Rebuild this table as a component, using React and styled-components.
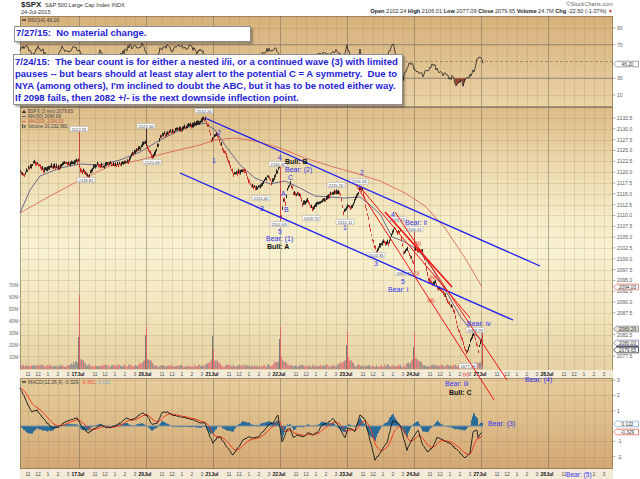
import React from 'react';
import styled, { createGlobalStyle } from 'styled-components';

const FONT = '"Liberation Sans", Arial, sans-serif';

const GlobalStyle = createGlobalStyle`
  html, body { margin: 0; padding: 0; background: #fff; }
  body { font-family: ${FONT}; }
`;

// ---- chart geometry (page pixel coords) ----
const TOP_RSI = 16, H_RSI = 91;
const TOP_MAIN = 107, H_MAIN = 263;
const TOP_S1 = 370, H_S1 = 8;
const TOP_MACD = 378, H_MACD = 91;
const TOP_S2 = 469, H_S2 = 10;

const py = p => 118 + (2132.5 - p) * 4.33;
const ry = v => 28 + (90 - v) * 0.8375;
const my = v => 426 - v * 15.3;

const rng = seed => () => {
  seed = (seed + 0x6d2b79f5) | 0;
  let t = Math.imul(seed ^ (seed >>> 15), 1 | seed);
  t = (t + Math.imul(t ^ (t >>> 7), 61 | t)) ^ t;
  return ((t ^ (t >>> 14)) >>> 0) / 4294967296;
};

const lerp = (pts, x) => {
  if (x <= pts[0][0]) return pts[0][1];
  for (let i = 1; i < pts.length; i++) {
    const [x1, y1] = pts[i];
    const [x0, y0] = pts[i - 1];
    if (x <= x1) return y0 + ((y1 - y0) * (x - x0)) / (x1 - x0 || 1);
  }
  return pts[pts.length - 1][1];
};

const toPath = pts => pts.map(([x, y], i) => `${i ? 'L' : 'M'}${x.toFixed(1)} ${y.toFixed(1)}`).join('');

const DAYS = [[79, '17Jul'], [146, '20Jul'], [213, '21Jul'], [280, '22Jul'], [347, '23Jul'], [414, '24Jul'], [481, '27Jul'], [548, '28Jul']];
const DAY_STARTS = [12, ...DAYS.map(d => d[0])];
const HOURS = DAY_STARTS.flatMap(D => [[D + 16, '11'], [D + 26, '12'], [D + 36, '1'], [D + 46, '2'], [D + 56, '3']])
  .filter(([x]) => x > 21 && x < 612);

const PRICE = [[20,172],[24,175],[28,168],[33,163],[38,164],[43,170],[48,168],[53,166],[58,168],[63,163],[68,164],[73,162],[78,160],[80,170],[84,172],[88,176],[92,169],[97,164],[103,166],[110,163],[116,165],[122,163],[128,161],[132,154],[136,151],[141,146],[145,142],[148,150],[152,157],[156,150],[160,137],[165,134],[170,132],[176,130],[182,128],[188,126],[193,125],[197,123],[201,120],[205,119],[208,126],[211,139],[214,137],[217,134],[219,141],[222,147],[226,156],[230,167],[233,174],[237,173],[241,171],[245,172],[249,183],[253,187],[257,188],[261,184],[265,180],[268,176],[271,182],[274,177],[277,171],[279,166],[281,216],[283,199],[285,204],[287,190],[290,183],[293,192],[296,196],[299,193],[302,204],[307,200],[312,209],[317,203],[322,201],[327,198],[331,193],[336,192],[340,194],[343,213],[347,205],[352,207],[355,198],[359,190],[362,188],[365,205],[368,219],[372,240],[376,251],[379,247],[383,242],[388,243],[392,233],[394,228],[397,233],[400,231],[403,252],[407,250],[410,257],[413,262],[415,249],[418,251],[422,250],[425,265],[428,280],[432,285],[435,283],[438,288],[443,293],[447,300],[452,308],[455,316],[458,330],[462,340],[465,350],[467,352],[470,341],[473,334],[475,338],[478,351],[480,343],[482,336]];

const MA50 = [[20,213],[30,190],[40,176],[60,168],[80,164],[100,165],[120,160],[140,152],[160,140],[180,130],[195,125],[205,123],[215,130],[225,145],[240,165],[255,178],[270,184],[285,181],[300,188],[315,196],[330,197],[345,198],[360,197],[370,205],[380,214],[392,237],[403,241],[418,250],[432,268],[447,293],[460,316],[472,332],[482,340]];

const MA200 = [[20,213],[50,196],[80,180],[110,166],[140,160],[170,152],[200,145],[215,140],[235,138],[255,141],[280,148],[305,158],[330,166],[355,173],[380,181],[405,193],[425,206],[445,228],[465,258],[482,287]];

const RSI = [[20,50],[26,46],[32,55],[38,47],[44,52],[50,60],[56,56],[62,48],[68,52],[74,46],[80,50],[86,62],[92,58],[100,52],[108,62],[116,58],[124,52],[130,46],[136,48],[142,45],[148,55],[155,62],[160,50],[166,46],[172,50],[178,47],[184,48],[190,46],[196,52],[202,50],[208,68],[214,84],[220,82],[228,78],[236,74],[244,70],[252,64],[258,58],[264,52],[270,49],[276,50],[280,55],[282,88],[286,70],[292,60],[298,66],[305,72],[312,60],[318,54],[324,51],[330,55],[336,50],[342,58],[347,47],[352,60],[356,66],[360,51],[364,70],[370,80],[376,84],[382,66],[388,54],[393,46],[397,58],[400,72],[403,79],[407,67],[410,62],[413,66],[418,72],[423,75],[428,70],[433,64],[437,70],[441,72],[446,75],[450,80],[453,76],[456,86],[460,80],[463,85],[466,78],[470,76],[474,70],[477,59],[480,58],[483,63]];

const MACD = [[20,388],[25,398],[28,405],[32,412],[37,410],[42,417],[47,423],[52,428],[58,427],[65,422],[70,420],[77,418],[82,427],[88,433],[95,428],[100,425],[107,428],[113,427],[120,423],[127,418],[132,420],[137,417],[142,413],[147,415],[152,425],[157,423],[162,413],[167,412],[173,415],[180,417],[187,418],[193,420],[200,423],[205,423],[210,437],[213,443],[217,438],[220,437],[227,447],[233,455],[238,448],[243,440],[248,437],[253,438],[258,437],[263,432],[268,425],[273,423],[278,415],[282,442],[287,430],[290,428],[293,437],[298,435],[303,437],[308,433],[313,435],[318,432],[322,425],[327,423],[333,419],[338,425],[345,438],[348,428],[355,431],[360,415],[365,420],[370,440],[375,460],[380,453],[387,442],[393,420],[400,425],[407,450],[410,443],[418,430],[422,443],[427,452],[433,447],[437,438],[443,440],[450,443],[457,450],[462,455],[465,458],[470,453],[473,432],[477,430],[478,437],[482,432]];

// ---- generated series ----
const BARS = (() => {
  const r = rng(7);
  let black = '', red = '';
  let prev = lerp(PRICE, 20);
  for (let x = 20; x <= 482; x++) {
    const y = lerp(PRICE, x) + (r() - 0.5) * 2.6;
    const hi = y - 0.8 - r() * 1.8;
    const lo = y + 0.8 + r() * 1.8;
    const seg = `M${x + 0.5} ${hi.toFixed(1)}V${lo.toFixed(1)}`;
    if (y > prev + 0.3) red += seg; else black += seg;
    prev = y;
  }
  return { black, red };
})();

const VOL = (() => {
  const r = rng(11);
  let red = '', gray = '';
  for (let x = 21; x <= 482; x++) {
    const D = 12 + 67 * Math.floor((x - 12) / 67);
    const t = x - D;
    let h = 2 + r() * 2.8;
    if (t > 58) h += (t - 58) * 0.5 + r() * 2;
    if (t > 0 && t < 8) h += (8 - t) * 0.9 + r() * 2;
    const seg = `M${x + 0.5} 369V${(369 - h).toFixed(1)}`;
    if (r() < 0.55) red += seg; else gray += seg;
  }
  return { red, gray };
})();

const SPIKES = [[79, 295, 337], [146, 327, 335], [213, 350, 336], [280, 327, 339], [347, 332, 345], [414, 333, 347]];

const RSI_LINE = (() => {
  const r = rng(3);
  const pts = [];
  for (let x = 20; x <= 483; x++) pts.push([x, Math.min(92, lerp(RSI, x) + (r() - 0.5) * 5)]);
  return pts;
})();

const MACD_SERIES = (() => {
  const r = rng(5);
  const m = [], s = [];
  let sig = lerp(MACD, 20);
  for (let x = 20; x <= 482; x++) {
    const v = lerp(MACD, x) + (r() - 0.5) * 1.4;
    sig += 0.16 * (v - sig);
    m.push([x, v]);
    s.push([x, sig]);
  }
  const hist = m.map(([x, v], i) => `M${x + 0.5} 426V${(426 + (v - s[i][1]) * 0.85).toFixed(1)}`).join('');
  return { m, s, hist };
})();

const PRICE_TAGS = [
  [79, 129, '2122.91'], [146, 126, '2125.50'], [152, 162, '2120.69'], [86, 180, '2118.81'],
  [204, 111, '2132.26'], [278, 164, '2116.92'], [261, 198, '2115.40'], [279, 224, '2102.63'],
  [311, 218, '2109.70'], [336, 185, '2115.20'], [345, 222, '2110.11'], [359, 181.5, '2116.33'],
  [397, 219, '2105.19'], [414, 229, '2106.01'], [376, 255, '2102.35'], [404, 273, '2096.72'],
  [475, 330, '2083.29'], [468, 366, '2077.09'],
];

// axis levels that the value tags cover are left out
const PRICE_LEVELS = Array.from({ length: 23 }, (_, i) => 2132.5 - i * 2.5)
  .filter(v => v !== 2085 && v !== 2080);

// ---- styled parts ----
const Page = styled.div`
  position: relative;
  width: 640px;
  height: 479px;
  overflow: hidden;
  background: #fff;
`;

const Header = styled.header`
  display: flex;
  justify-content: space-between;
  height: 16px;
  padding: 1px 27px 0 21px;
  box-sizing: border-box;
  color: #333;
  font-family: ${FONT};
`;

const HeadBlock = styled.div`
  display: flex;
  flex-direction: column;
  align-items: ${p => (p.$right ? 'flex-end' : 'flex-start')};
`;

const HeadLine = styled.div`
  font-size: 5.6px;
  line-height: 7px;
  white-space: nowrap;
  color: ${p => p.$muted ? '#666' : '#333'};
`;

const Ticker = styled.b`
  font-size: 8px;
  color: #222;
  margin-right: 2px;
`;

const Key = styled.b`
  color: #222;
`;

const DownArrow = styled.span`
  color: #d01818;
  font-size: 5px;
`;

const ChartStack = styled.div`
  position: relative;
  display: flex;
  flex-direction: column;
`;

const PanelRow = styled.div`
  display: grid;
  grid-template-columns: 20px 593px 27px;
  height: ${p => p.$h}px;
`;

const Plot = styled.div`
  position: relative;
  background: ${p => p.$bg};
  &::after {
    content: '';
    position: absolute;
    inset: 0;
    border: 1px solid rgba(110, 95, 70, 0.55);
    border-width: ${p => p.$edges || '1px'};
    pointer-events: none;
  }
`;

const StripCell = styled.div`
  background: #f4ead8;
`;

const Svg = styled.svg`
  display: block;
  overflow: visible;
`;

const Overlay = styled.svg`
  position: absolute;
  left: 0;
  top: 0;
  pointer-events: none;
  overflow: visible;
`;

const Note = styled.div`
  position: absolute;
  left: ${p => p.$x}px;
  top: ${p => p.$y}px;
  width: ${p => p.$w}px;
  box-sizing: border-box;
  padding: ${p => p.$pad};
  background: #fff;
  border: 1px solid #8e8e8e;
  box-shadow: 2px 2px 2px rgba(0, 0, 0, 0.3);
  color: #1e22d8;
  font: bold 9.5px/12px ${FONT};
  white-space: pre;
`;

const RSI_BG = 'linear-gradient(180deg, #d6b07b 0%, #dfc08e 45%, #ead3a6 100%)';
const MAIN_BG = 'linear-gradient(180deg, #dcbb86 0%, #ecd9ad 22%, #f6edca 45%, #f8f1d0 55%, #f1e4bc 78%, #e6d1a2 100%)';
const MACD_BG = 'linear-gradient(180deg, #e7cd9d 0%, #dcbb88 50%, #d2a875 100%)';

// ---- svg pieces ----
const VGrid = ({ top, h }) => (
  <g>
    {HOURS.map(([x]) => (
      <line key={x} x1={x + 0.5} x2={x + 0.5} y1={top} y2={top + h} stroke="rgba(140,110,60,0.17)" strokeWidth="1" />
    ))}
    {DAYS.map(([x]) => (
      <line key={'d' + x} x1={x + 0.5} x2={x + 0.5} y1={top} y2={top + h} stroke="rgba(95,85,70,0.42)" strokeWidth="1" />
    ))}
  </g>
);

const HGrid = ({ ys, stroke = 'rgba(140,110,60,0.17)' }) => (
  <g>
    {ys.map(y => (
      <line key={y} x1="20" x2="613" y1={Math.round(y) + 0.5} y2={Math.round(y) + 0.5} stroke={stroke} strokeWidth="1" />
    ))}
  </g>
);

const AxisLabels = ({ items }) => (
  <g fontFamily={FONT} fontSize="5" fill="#5a5a5a">
    {items.map(([y, t]) => (
      <g key={t}>
        <line x1="613" x2="615.5" y1={y} y2={y} stroke="#777" strokeWidth="0.6" />
        <text x="617" y={y} dominantBaseline="central">{t}</text>
      </g>
    ))}
  </g>
);

const AxisTag = ({ y, t, stroke, fill = '#fff', color = '#333' }) => (
  <g fontFamily={FONT} fontSize="4.8">
    <path d={`M613.5 ${y} L616.5 ${y - 2.8} H638.5 V${y + 2.8} H616.5 Z`} fill={fill} stroke={stroke} strokeWidth="0.7" />
    <text x="627.5" y={y + 0.2} dominantBaseline="central" textAnchor="middle" fill={color}>{t}</text>
  </g>
);

const PriceTag = ({ x, y, t }) => (
  <g>
    <rect x={x - 9} y={y - 2.6} width="18" height="5.2" rx="0.6" fill="#fff" stroke="#a0a0a0" strokeWidth="0.5" />
    <text x={x} y={y + 0.2} fontFamily={FONT} fontSize="4.2" fill="#444" textAnchor="middle" dominantBaseline="central">{t}</text>
  </g>
);

const WaveText = ({ x, y, children, color = '#3434f0', bold, size = 7, anchor = 'start' }) => (
  <text x={x} y={y} fill={color} fontFamily={FONT} fontSize={size} fontWeight={bold ? 'bold' : 'normal'} textAnchor={anchor} dominantBaseline="central">
    {children}
  </text>
);

const TimeAxis = ({ top, h, hide = [] }) => (
  <Svg width="593" height={h} viewBox={`20 ${top} 593 ${h}`}>
    <g fontFamily={FONT} fontSize="5" textAnchor="middle" dominantBaseline="central">
      {HOURS.filter(([x]) => !hide.includes(x)).map(([x, t]) => (
        <text key={x} x={x} y={top + h / 2} fill="#555">{t}</text>
      ))}
      {DAYS.map(([x, t]) => (
        <text key={t} x={x - 1} y={top + h / 2} fill="#111" fontWeight="bold">{t}</text>
      ))}
    </g>
  </Svg>
);

// ---- panels ----
const RsiPanel = () => (
  <PanelRow $h={H_RSI}>
    <div />
    <Plot $bg={RSI_BG}>
      <Svg width="593" height={H_RSI} viewBox={`20 ${TOP_RSI} 593 ${H_RSI}`}>
        <VGrid top={TOP_RSI} h={H_RSI} />
        <HGrid ys={[ry(90), ry(10)]} />
        <line x1="20" x2="613" y1={ry(70)} y2={ry(70)} stroke="#8d8170" strokeWidth="1" />
        <line x1="20" x2="613" y1={ry(30)} y2={ry(30)} stroke="#8d8170" strokeWidth="1" />
        <line x1="20" x2="613" y1={ry(50)} y2={ry(50)} stroke="#8d8170" strokeWidth="0.8" strokeDasharray="3 2" />
        <path
          d={RSI_LINE.filter(([, y]) => y > ry(30)).map(([x, y]) => `M${x + 0.5} ${ry(30)}V${y.toFixed(1)}`).join('')}
          stroke="#9b4434" strokeWidth="1"
        />
        <path d={toPath(RSI_LINE)} fill="none" stroke="#222" strokeWidth="0.8" />
        <path d="M22 20h4" stroke="#222" strokeWidth="1.2" />
        <text x="28" y="20" fontFamily={FONT} fontSize="5" fill="#444" dominantBaseline="central">RSI(14) 46.20</text>
      </Svg>
    </Plot>
    <Svg width="27" height={H_RSI} viewBox={`613 ${TOP_RSI} 27 ${H_RSI}`}>
      <AxisLabels items={[[ry(90), '90'], [ry(70), '70'], [ry(30), '30'], [ry(10), '10']]} />
      <AxisTag y={64} t="46.20" stroke="#777" />
    </Svg>
  </PanelRow>
);

const MainPanel = () => (
  <PanelRow $h={H_MAIN}>
    <Svg width="20" height={H_MAIN} viewBox={`0 ${TOP_MAIN} 20 ${H_MAIN}`}>
      <g fontFamily={FONT} fontSize="4.6" fill="#666" textAnchor="end">
        {[70, 60, 50, 40, 30, 20, 10].map(v => (
          <g key={v}>
            <text x="18" y={369 - v * 1.2} dominantBaseline="central">{v}M</text>
            <line x1="18.5" x2="20" y1={369 - v * 1.2} y2={369 - v * 1.2} stroke="#888" strokeWidth="0.5" />
          </g>
        ))}
      </g>
    </Svg>
    <Plot $bg={MAIN_BG} $edges="0 1px 0 1px">
      <Svg width="593" height={H_MAIN} viewBox={`20 ${TOP_MAIN} 593 ${H_MAIN}`}>
        <VGrid top={TOP_MAIN} h={H_MAIN} />
        <HGrid ys={Array.from({ length: 24 }, (_, i) => py(2135 - i * 2.5))} />
        <line x1="20" x2="613" y1="107.5" y2="107.5" stroke="#8d8170" strokeWidth="1" />
        <path d={VOL.red} stroke="#e07878" strokeWidth="1" opacity="0.85" />
        <path d={VOL.gray} stroke="#8c8c8c" strokeWidth="1" opacity="0.85" />
        {SPIKES.map(([x, rt, gt]) => (
          <g key={x}>
            <line x1={x + 0.5} x2={x + 0.5} y1="369" y2={rt} stroke="#e06464" strokeWidth="1" />
            <line x1={x - 0.5} x2={x - 0.5} y1="369" y2={gt} stroke="#7a7a7a" strokeWidth="1" />
          </g>
        ))}
        <path d={toPath(MA200)} fill="none" stroke="#d85a4c" strokeWidth="0.8" />
        <path d={toPath(MA50)} fill="none" stroke="#5b5b84" strokeWidth="0.9" />
        <path d={BARS.red} stroke="#cf1d1d" strokeWidth="0.9" />
        <path d={BARS.black} stroke="#111" strokeWidth="0.9" />
        <line x1="79.5" x2="79.5" y1="131" y2="162" stroke="#d23030" strokeWidth="0.8" />
        <line x1="146.5" x2="146.5" y1="128" y2="146" stroke="#111" strokeWidth="0.8" />
        <line x1="280.5" x2="280.5" y1="166" y2="221" stroke="#d23030" strokeWidth="0.8" />
        <line x1="414.5" x2="414.5" y1="231" y2="272" stroke="#d23030" strokeWidth="0.8" />
        <line x1="482.5" x2="482.5" y1="330" y2="366" stroke="#d23030" strokeWidth="0.8" />
        {PRICE_TAGS.map(([x, y, t]) => <PriceTag key={t} x={x} y={y} t={t} />)}
        <g fontFamily={FONT} fontSize="4.6" fill="#444">
          <path d="M22 113l2-3 2 3z" fill="#222" />
          <text x="28" y="111.5" dominantBaseline="central">$SPX (3 min) 2079.65</text>
          <path d="M22 116.5h4" stroke="#5b5b84" strokeWidth="1" />
          <text x="28" y="116.5" dominantBaseline="central">MA(50) 2086.99</text>
          <path d="M22 121.5h4" stroke="#d85a4c" strokeWidth="1" />
          <text x="28" y="121.5" dominantBaseline="central" fill="#c05040">MA(200) 2094.03</text>
          <path d="M22 128V124h1.2v4zM24.2 128v-3h1.2v3z" fill="#555" />
          <text x="28" y="126.5" dominantBaseline="central">Volume 20,232,982</text>
        </g>
      </Svg>
    </Plot>
    <Svg width="27" height={H_MAIN} viewBox={`613 ${TOP_MAIN} 27 ${H_MAIN}`}>
      <AxisLabels items={PRICE_LEVELS.map(v => [py(v), v.toFixed(1)])} />
      <AxisTag y={287} t="2094.03" stroke="#d85a4c" />
      <AxisTag y={329} t="2083.29" stroke="#777" fill="#e8e2d8" />
      <AxisTag y={343} t="2080.00" stroke="#6a6a9a" />
      <line x1="616" x2="638.5" y1="346.3" y2="346.3" stroke="#1c1c50" strokeWidth="0.8" />
      <AxisTag y={350} t="2079.65" stroke="#111" />
    </Svg>
  </PanelRow>
);

const AxisStrip = ({ top, h, hide }) => (
  <PanelRow $h={h}>
    <div />
    <StripCell>
      <TimeAxis top={top} h={h} hide={hide} />
    </StripCell>
    <div />
  </PanelRow>
);

const MacdPanel = () => (
  <PanelRow $h={H_MACD}>
    <div />
    <Plot $bg={MACD_BG}>
      <Svg width="593" height={H_MACD} viewBox={`20 ${TOP_MACD} 593 ${H_MACD}`}>
        <VGrid top={TOP_MACD} h={H_MACD} />
        <HGrid ys={[my(3), my(2), my(1), my(-1), my(-2)]} stroke="rgba(150,115,65,0.2)" />
        <path d={MACD_SERIES.hist} stroke="#2a6c98" strokeWidth="1" />
        <line x1="20" x2="483" y1="426" y2="426" stroke="#7d8fa0" strokeWidth="1" />
        <path d={toPath(MACD_SERIES.s)} fill="none" stroke="#f23a22" strokeWidth="1" />
        <path d={toPath(MACD_SERIES.m)} fill="none" stroke="#151515" strokeWidth="0.9" />
        <path d="M22 382h4" stroke="#111" strokeWidth="1.2" />
        <text x="28" y="382" fontFamily={FONT} fontSize="5" fill="#444" dominantBaseline="central">
          MACD(12,26,9) -0.329, <tspan fill="#e84a3a">-0.451</tspan>, <tspan fill="#7ea4c6">0.122</tspan>
        </text>
      </Svg>
    </Plot>
    <Svg width="27" height={H_MACD} viewBox={`613 ${TOP_MACD} 27 ${H_MACD}`}>
      <AxisLabels items={[[my(3), '3'], [my(2), '2'], [my(1), '1'], [my(-1), '-1'], [my(-2), '-2']]} />
      <AxisTag y={424} t="0.122" stroke="#7ea4c6" />
      <AxisTag y={432} t="-0.329" stroke="#e84a3a" />
    </Svg>
  </PanelRow>
);

const Annotations = () => (
  <Overlay width="640" height="463" viewBox="0 16 640 463">
    <g stroke="#1c1cf0" strokeWidth="1.3">
      <line x1="205" y1="118" x2="540" y2="266" />
      <line x1="180" y1="173" x2="513" y2="320" />
    </g>
    <g stroke="#f01414" strokeWidth="1">
      <line x1="356" y1="185" x2="494" y2="400" />
      <line x1="360" y1="187" x2="470" y2="318" />
      <line x1="395" y1="212" x2="507" y2="380" />
      <line x1="385" y1="212" x2="452" y2="287" strokeWidth="1.6" />
    </g>
    <WaveText x={212} y={160}>1</WaveText>
    <WaveText x={217} y={132}>2</WaveText>
    <WaveText x={260} y={208}>3</WaveText>
    <WaveText x={278} y={157}>4</WaveText>
    <WaveText x={278} y={231.5}>5</WaveText>
    <WaveText x={281} y={193}>A</WaveText>
    <WaveText x={284} y={209}>B</WaveText>
    <WaveText x={288} y={177}>C</WaveText>
    <WaveText x={343} y={227}>1</WaveText>
    <WaveText x={360} y={172.5}>2</WaveText>
    <WaveText x={374} y={263}>3</WaveText>
    <WaveText x={391} y={214}>4</WaveText>
    <WaveText x={401} y={281}>5</WaveText>
    <WaveText x={266} y={238}>Bear: (1)</WaveText>
    <WaveText x={267} y={246} color="#111" bold>Bull: A</WaveText>
    <WaveText x={285} y={161} color="#111" bold>Bull: B</WaveText>
    <WaveText x={285} y={169}>Bear: (2)</WaveText>
    <WaveText x={405} y={222}>Bear: ii</WaveText>
    <WaveText x={388} y={289}>Bear: i</WaveText>
    <WaveText x={467} y={323}>Bear: iv</WaveText>
    <WaveText x={445} y={383}>Bear: iii</WaveText>
    <WaveText x={449} y={392} color="#111" bold>Bull: C</WaveText>
    <WaveText x={488} y={423}>Bear: (3)</WaveText>
    <WaveText x={525} y={379}>Bear: (4)</WaveText>
    <WaveText x={566} y={474} size={6.6}>Bear: (5)</WaveText>
    <WaveText x={417} y={273} color="#e01818" size={5.5} anchor="middle">(i)</WaveText>
    <WaveText x={418} y={243} color="#e01818" size={5.5} anchor="middle">(ii)</WaveText>
    <WaveText x={431} y={300} color="#e01818" size={5.5} anchor="middle">(iii)</WaveText>
    <WaveText x={433} y={277} color="#e01818" size={5.5} anchor="middle">(iv)</WaveText>
    <WaveText x={466} y={374} color="#e01818" size={5.5} anchor="middle">(v)</WaveText>
  </Overlay>
);

const App = () => (
  <Page>
    <GlobalStyle />
    <Header>
      <HeadBlock>
        <HeadLine><Ticker>$SPX</Ticker> S&amp;P 500 Large Cap Index INDX</HeadLine>
        <HeadLine>24-Jul-2015</HeadLine>
      </HeadBlock>
      <HeadBlock $right>
        <HeadLine $muted>©StockCharts.com</HeadLine>
        <HeadLine>
          <Key>Open</Key> 2102.24 <Key>High</Key> 2106.01 <Key>Low</Key> 2077.09 <Key>Close</Key> 2079.65{' '}
          <Key>Volume</Key> 24.7M <Key>Chg</Key> -22.50 (-1.07%) <DownArrow>▼</DownArrow>
        </HeadLine>
      </HeadBlock>
    </Header>
    <ChartStack>
      <RsiPanel />
      <MainPanel />
      <AxisStrip top={TOP_S1} h={H_S1} />
      <MacdPanel />
      <AxisStrip top={TOP_S2} h={H_S2} hide={[574, 584]} />
      <Annotations />
    </ChartStack>
    <Note $x={14} $y={26} $w={237} $pad="0 2px 2px 1px">7/27/15:  No material change.</Note>
    <Note $x={13} $y={54} $w={390} $pad="1px 2px 0 1px">
      {'7/24/15:  The bear count is for either a nested i/ii, or a continued wave (3) with limited\n' +
        'pauses -- but bears should at least stay alert to the potential C = A symmetry.  Due to\n' +
        "NYA (among others), I'm inclined to doubt the ABC, but it has to be noted either way.\n" +
        'If 2098 fails, then 2082 +/- is the next downside inflection point.'}
    </Note>
  </Page>
);

export default App;
